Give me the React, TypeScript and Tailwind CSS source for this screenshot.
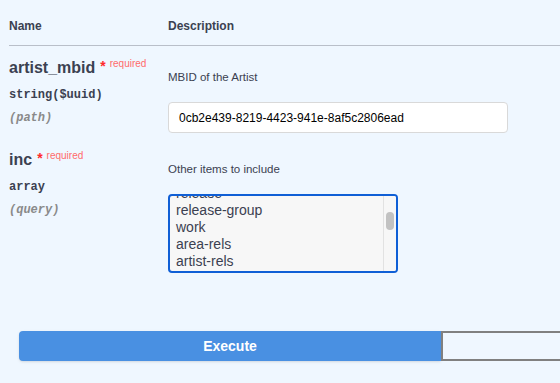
// Parameters table of an operation, with the Execute / Clear buttons.
const SANS = "font-['Liberation_Sans',Arial,sans-serif]";
const MONO = "font-['Liberation_Mono','Courier_New',monospace]";

const OPCIONES = ["release", "release-group", "work", "area-rels", "artist-rels"];

function Nombre({ nombre }: { nombre: string }) {
  return (
    <div className="flex items-start h-[20px] leading-[20px]">
      <span className="text-[16px] font-bold text-[#3b4151]">{nombre}</span>
      <span className="ml-[5px] text-[14px] font-bold leading-[14px] text-[#ff2b2b] mt-[1px]">*</span>
      <span className="ml-[4px] text-[10px] leading-[12px] text-[#ff6b6b]">required</span>
    </div>
  );
}

function Tipo({ tipo, donde }: { tipo: string; donde: string }) {
  return (
    <>
      <div className={`${MONO} mt-[10px] text-[12px] leading-[15px] font-bold text-[#3b4151]`}>{tipo}</div>
      <div className={`${MONO} mt-[8px] text-[12px] leading-[15px] font-bold italic text-[#8a8a8a]`}>{donde}</div>
    </>
  );
}

export default function App() {
  return (
    <div className={`${SANS} w-[560px] h-[383px] overflow-hidden bg-[#eff7ff] text-[#3b4151]`}>
      {/* cabecera */}
      <div className="ml-[9px] grid grid-cols-[159px_1fr] h-[46px] border-b border-[#b9bfc9] pt-[18px]">
        <div className="text-[12px] font-bold leading-[16px]">Name</div>
        <div className="text-[12px] font-bold leading-[16px]">Description</div>
      </div>

      {/* artist_mbid */}
      <div className="ml-[9px] grid grid-cols-[159px_1fr] items-start">
        <div className="pt-[12px]">
          <Nombre nombre="artist_mbid" />
          <Tipo tipo="string($uuid)" donde="(path)" />
        </div>
        <div className="pt-[23px]">
          <div className="text-[11.5px] leading-[16px]">MBID of the Artist</div>
          <div className="mt-[17px] w-[340px] h-[31px] rounded-[4px] border border-[#d9d9d9] bg-white px-[10px] flex items-center text-[12px] text-black">
            0cb2e439-8219-4423-941e-8af5c2806ead
          </div>
        </div>
      </div>

      {/* inc */}
      <div className="ml-[9px] grid grid-cols-[159px_1fr] items-start">
        <div className="pt-[17px]">
          <Nombre nombre="inc" />
          <Tipo tipo="array" donde="(query)" />
        </div>
        <div className="pt-[28px]">
          <div className="text-[11.5px] leading-[16px]">Other items to include</div>
          <div className="mt-[17px] w-[230px] h-[79px] rounded-[4px] border-2 border-[#0f5fd6] bg-[#f7f7f7] flex overflow-hidden">
            <div className="flex-1 overflow-hidden">
              <div className="mt-[-11px] pl-[6px]">
                {OPCIONES.map((o) => (
                  <div key={o} className="text-[14px] leading-[17px] text-[#3b4151]">
                    {o}
                  </div>
                ))}
              </div>
            </div>
            <div className="w-[13px] border-l border-[#e2e2e2] bg-[#f7f7f7] pt-[16px] flex justify-center">
              <div className="w-[8px] h-[18px] rounded-full bg-[#c2c2c2]" />
            </div>
          </div>
        </div>
      </div>

      {/* botones */}
      <div className="ml-[19px] mt-[58px] flex w-[844px]">
        <button
          type="button"
          className="w-[422px] h-[30px] shrink-0 rounded-l-[4px] bg-[#4990e2] text-white text-[14px] font-bold shadow-sm"
        >
          Execute
        </button>
        <div className="w-[422px] h-[30px] shrink-0 border-2 border-[#808080] bg-[#eff7ff]" />
      </div>
    </div>
  );
}
